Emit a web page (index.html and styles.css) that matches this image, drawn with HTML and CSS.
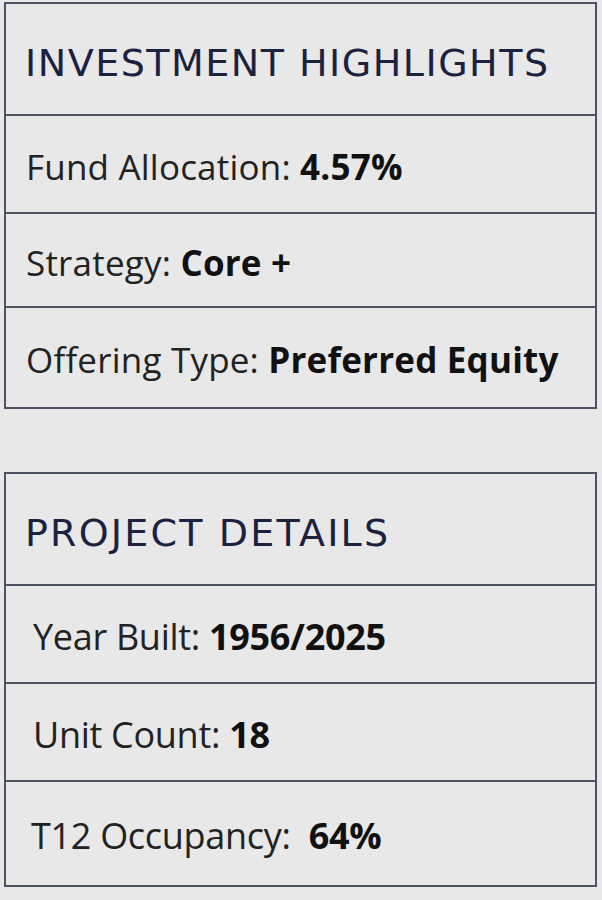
FILE: index.html
```html
<!DOCTYPE html>
<html>
<head>
<meta charset="utf-8">
<link rel="stylesheet" href="styles.css">
</head>
<body>
<div class="page">
  <section class="card">
    <div class="head"><h2>INVESTMENT HIGHLIGHTS</h2></div>
    <div class="row r1">Fund Allocation: <b>4.57%</b></div>
    <div class="row r2">Strategy: <b>Core +</b></div>
    <div class="row r3">Offering Type: <b>Preferred Equity</b></div>
  </section>
  <section class="card big">
    <div class="head"><h2>PROJECT DETAILS</h2></div>
    <div class="row r1 ind">Year Built: <b>1956/2025</b></div>
    <div class="row r1 ind">Unit Count: <b>18</b></div>
    <div class="row r4 ind2">T12 Occupancy:&nbsp; <b>64%</b></div>
  </section>
</div>
</body>
</html>
```

FILE: styles.css
```css
html, body { margin: 0; padding: 0; background: #e8e8e8; }
.page {
  padding: 2px 5px 0 4px;
  display: flex;
  flex-direction: column;
  gap: 63px;
}
.card {
  border: 2px solid #4b5263;
  display: flex;
  flex-direction: column;
  background: #e8e8e8;
}
.head {
  height: 112px;
  display: flex;
  align-items: center;
  padding: 8px 0 0 19px;
  box-sizing: border-box;
  border-bottom: 2px solid #4b5263;
}
.head h2 {
  margin: 0;
  font-family: "DejaVu Sans", sans-serif;
  font-weight: normal;
  font-size: 38px;
  color: #1b2240;
  letter-spacing: 1.5px;
}
.big .head h2 { letter-spacing: 2.2px; }
.row {
  display: flex;
  align-items: center;
  padding: 4px 0 0 20px;
  box-sizing: border-box;
  font-family: "Open Sans", sans-serif;
  font-size: 35px;
  color: #222;
  border-bottom: 2px solid #4b5263;
  white-space: pre;
  letter-spacing: 0.2px;
}
.big .row { font-size: 36px; letter-spacing: -0.3px; }
.row:last-child { border-bottom: none; }
.row b { font-weight: 700; color: #111; }
.r1 { height: 98px; }
.r2 { height: 94px; }
.r3 { height: 99px; }
.r4 { height: 103px; }
.ind { padding-left: 27px; }
.ind2 { padding-left: 25px; }
```
